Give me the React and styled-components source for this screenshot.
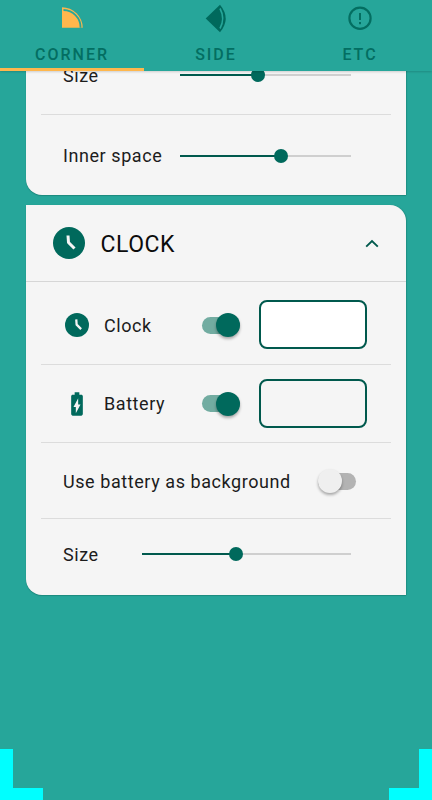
import React from "react";
import styled, { createGlobalStyle } from "styled-components";

const Global = createGlobalStyle`
  html, body { margin: 0; padding: 0; background: #26a69a; }
  body { font-family: Roboto, "Liberation Sans", sans-serif; overflow: hidden; }
  * { box-sizing: border-box; }
`;

const Screen = styled.div`
  position: relative;
  width: 432px;
  height: 800px;
  background: #26a69a;
  display: flex;
  flex-direction: column;
  overflow: hidden;
`;

const TabBar = styled.div`
  position: relative;
  z-index: 2;
  display: grid;
  grid-template-columns: repeat(3, 1fr);
  height: 71px;
  flex: none;
  background: #26a69a;
  box-shadow: 0 1px 2px rgba(0, 0, 0, 0.16);
`;

const Tab = styled.div`
  display: flex;
  flex-direction: column;
  align-items: center;
  height: 71px;
  padding-top: 2px;
  border-bottom: 3px solid ${(p) => (p.$active ? "#ffb74d" : "transparent")};
`;

const TabIcon = styled.svg`
  width: 36px;
  height: 36px;
  display: block;
  flex: none;
`;

const TabLabel = styled.div`
  margin-top: 8px;
  font-size: 16px;
  line-height: 18px;
  font-weight: 500;
  letter-spacing: 2px;
  color: #00695c;
  opacity: 0.9;
`;

const Scroller = styled.div`
  flex: 1;
  min-height: 0;
  overflow: hidden;
  padding: 0 26px;
  display: flex;
  flex-direction: column;
  gap: 10px;
`;

const Card = styled.section`
  flex: none;
  width: 380px;
  margin-top: ${(p) => p.$offset || 0}px;
  background: #f5f5f5;
  border-radius: 0 16px 0 16px;
  box-shadow: 0 1px 1px rgba(0, 60, 50, 0.25), 0.5px 0 1px rgba(0, 60, 50, 0.18);
`;

const CardHeader = styled.header`
  display: flex;
  align-items: center;
  height: 77px;
  padding: 0 27px 0 27px;
  border-bottom: 1px solid #d6d6d6;
`;

const HeaderTitle = styled.h2`
  flex: 1;
  margin: 2px 0 0 15.5px;
  font-size: 23px;
  font-weight: 400;
  letter-spacing: 0.55px;
  color: #0c0c0c;
`;

const Row = styled.div`
  display: flex;
  align-items: center;
  height: ${(p) => p.$h}px;
  margin: 0 15px;
  padding: ${(p) => p.$pt || 0}px 0 ${(p) => p.$pb || 0}px 22px;
  border-bottom: ${(p) => (p.$last ? "none" : "1px solid #dcdcdc")};
`;

const IconSlot = styled.div`
  width: 28px;
  height: 28px;
  margin-right: 13px;
  display: flex;
  align-items: center;
  justify-content: center;
  flex: none;
`;

const Label = styled.span`
  font-size: 18px;
  letter-spacing: 0.57px;
  color: #1c1c1c;
  white-space: nowrap;
  width: ${(p) => (p.$w ? `${p.$w}px` : "auto")};
  flex: none;
`;

const SliderTrack = styled.div`
  position: relative;
  width: ${(p) => p.$w}px;
  height: 2px;
  background: #cfcfcf;
  flex: none;
`;

const SliderFill = styled.div`
  height: 100%;
  width: ${(p) => p.$v}%;
  background: #00594d;
`;

const SliderThumb = styled.div`
  position: absolute;
  top: 50%;
  left: ${(p) => p.$v}%;
  width: 14px;
  height: 14px;
  margin: -7px 0 0 -7px;
  border-radius: 50%;
  background: #00695c;
`;

const Toggle = styled.div`
  position: relative;
  width: 38px;
  height: 17px;
  margin-left: ${(p) => p.$ml || 0}px;
  border-radius: 9px;
  background: ${(p) => (p.$on ? "#72aca1" : "#b3b3b3")};
  flex: none;
`;

const ToggleThumb = styled.div`
  position: absolute;
  top: -3.5px;
  ${(p) => (p.$on ? "right: 0;" : "left: 0;")}
  width: 24px;
  height: 24px;
  border-radius: 50%;
  background: ${(p) => (p.$on ? "#00695c" : "#efefef")};
  box-shadow: 0 2px 3px rgba(0, 0, 0, 0.32);
`;

const Swatch = styled.div`
  width: 108px;
  height: 49px;
  margin: ${(p) => p.$dy || 0}px 0 0 19px;
  border: 2px solid #00594d;
  border-radius: 8px;
  background: ${(p) => p.$color};
  flex: none;
`;

const CornerMark = styled.div`
  position: absolute;
  bottom: 0;
  ${(p) => p.$side}: 0;
  width: 43px;
  height: 51px;
  z-index: 3;
  &::before {
    content: "";
    position: absolute;
    ${(p) => p.$side}: 0;
    bottom: 0;
    width: 13px;
    height: 51px;
    background: #00ffff;
  }
  &::after {
    content: "";
    position: absolute;
    ${(p) => p.$side}: 0;
    bottom: 0;
    width: 43px;
    height: 12px;
    background: #00ffff;
  }
`;

const ClockIcon = ({ size }) => (
  <svg width={size} height={size} viewBox="0 0 32 32">
    <circle cx="16" cy="16" r="16" fill="#00695c" />
    <path d="M15 8.5 L15.5 15.5 L21.5 21.5" fill="none" stroke="#f5f5f5" strokeWidth="3" strokeLinejoin="round" />
  </svg>
);

const BatteryIcon = () => (
  <svg width="28" height="28" viewBox="0 0 24 24">
    <path
      fill="#00695c"
      fillRule="evenodd"
      d="M15.67 4H14V2h-4v2H8.33C7.6 4 7 4.6 7 5.33v15.33C7 21.4 7.6 22 8.33 22h7.33c.74 0 1.34-.6 1.34-1.33V5.33C17 4.6 16.4 4 15.67 4zM11 20v-5.5H9L13 7v5.5h2L11 20z"
    />
  </svg>
);

const ChevronUp = () => (
  <svg width="14" height="9" viewBox="0 0 14 9">
    <path d="M1.2 7.6 L7 2 L12.8 7.6" fill="none" stroke="#00594d" strokeWidth="1.9" />
  </svg>
);

const CornerTabIcon = () => (
  <TabIcon viewBox="0 0 36 36">
    <path d="M8 5.3 A20.7 20.7 0 0 1 28.7 25.7 L8 25.7 Z" fill="#ffb74d" />
    <path d="M9.5 8 A17.3 17.3 0 0 1 26.6 25.7" fill="none" stroke="#26a69a" strokeWidth="1.8" />
  </TabIcon>
);

const SideTabIcon = () => (
  <TabIcon viewBox="0 0 36 36">
    <path d="M7.7 16.5 L22 2.7 Q33.4 16.5 22 30.3 Z" fill="#00695c" />
    <path d="M22 6.5 Q27.4 16.5 22 26.5" fill="none" stroke="#26a69a" strokeWidth="1.6" />
  </TabIcon>
);

const EtcTabIcon = () => (
  <TabIcon viewBox="0 0 36 36">
    <circle cx="18" cy="16.3" r="10.6" fill="none" stroke="#00695c" strokeWidth="2.2" opacity="0.92" />
    <rect x="17" y="11" width="2" height="7" fill="#00695c" opacity="0.92" />
    <rect x="17" y="20" width="2" height="2.2" fill="#00695c" opacity="0.92" />
  </TabIcon>
);

const Slider = ({ width, value }) => (
  <SliderTrack $w={width}>
    <SliderFill $v={value} />
    <SliderThumb $v={value} />
  </SliderTrack>
);

const Switch = ({ on, ml }) => (
  <Toggle $on={on} $ml={ml}>
    <ToggleThumb $on={on} />
  </Toggle>
);

export default function App() {
  return (
    <Screen>
      <Global />
      <TabBar>
        <Tab $active>
          <CornerTabIcon />
          <TabLabel>CORNER</TabLabel>
        </Tab>
        <Tab>
          <SideTabIcon />
          <TabLabel>SIDE</TabLabel>
        </Tab>
        <Tab>
          <EtcTabIcon />
          <TabLabel>ETC</TabLabel>
        </Tab>
      </TabBar>
      <Scroller>
        <Card $offset={-35}>
          <Row $h={79}>
            <Label $w={117}>Size</Label>
            <Slider width={171} value={45.6} />
          </Row>
          <Row $h={80} $last $pt={1}>
            <Label $w={117}>Inner space</Label>
            <Slider width={171} value={59} />
          </Row>
        </Card>
        <Card>
          <CardHeader>
            <ClockIcon size={32} />
            <HeaderTitle>CLOCK</HeaderTitle>
            <ChevronUp />
          </CardHeader>
          <Row $h={83} $pt={4}>
            <IconSlot>
              <ClockIcon size={24} />
            </IconSlot>
            <Label $w={98}>Clock</Label>
            <Switch on />
            <Swatch $color="#ffffff" $dy={-2} />
          </Row>
          <Row $h={78}>
            <IconSlot>
              <BatteryIcon />
            </IconSlot>
            <Label $w={98}>Battery</Label>
            <Switch on />
            <Swatch $color="transparent" />
          </Row>
          <Row $h={76} $pt={1}>
            <Label>Use battery as background</Label>
            <Switch ml={27} />
          </Row>
          <Row $h={76} $last $pb={6}>
            <Label $w={79}>Size</Label>
            <Slider width={209} value={45} />
          </Row>
        </Card>
      </Scroller>
      <CornerMark $side="left" />
      <CornerMark $side="right" />
    </Screen>
  );
}
